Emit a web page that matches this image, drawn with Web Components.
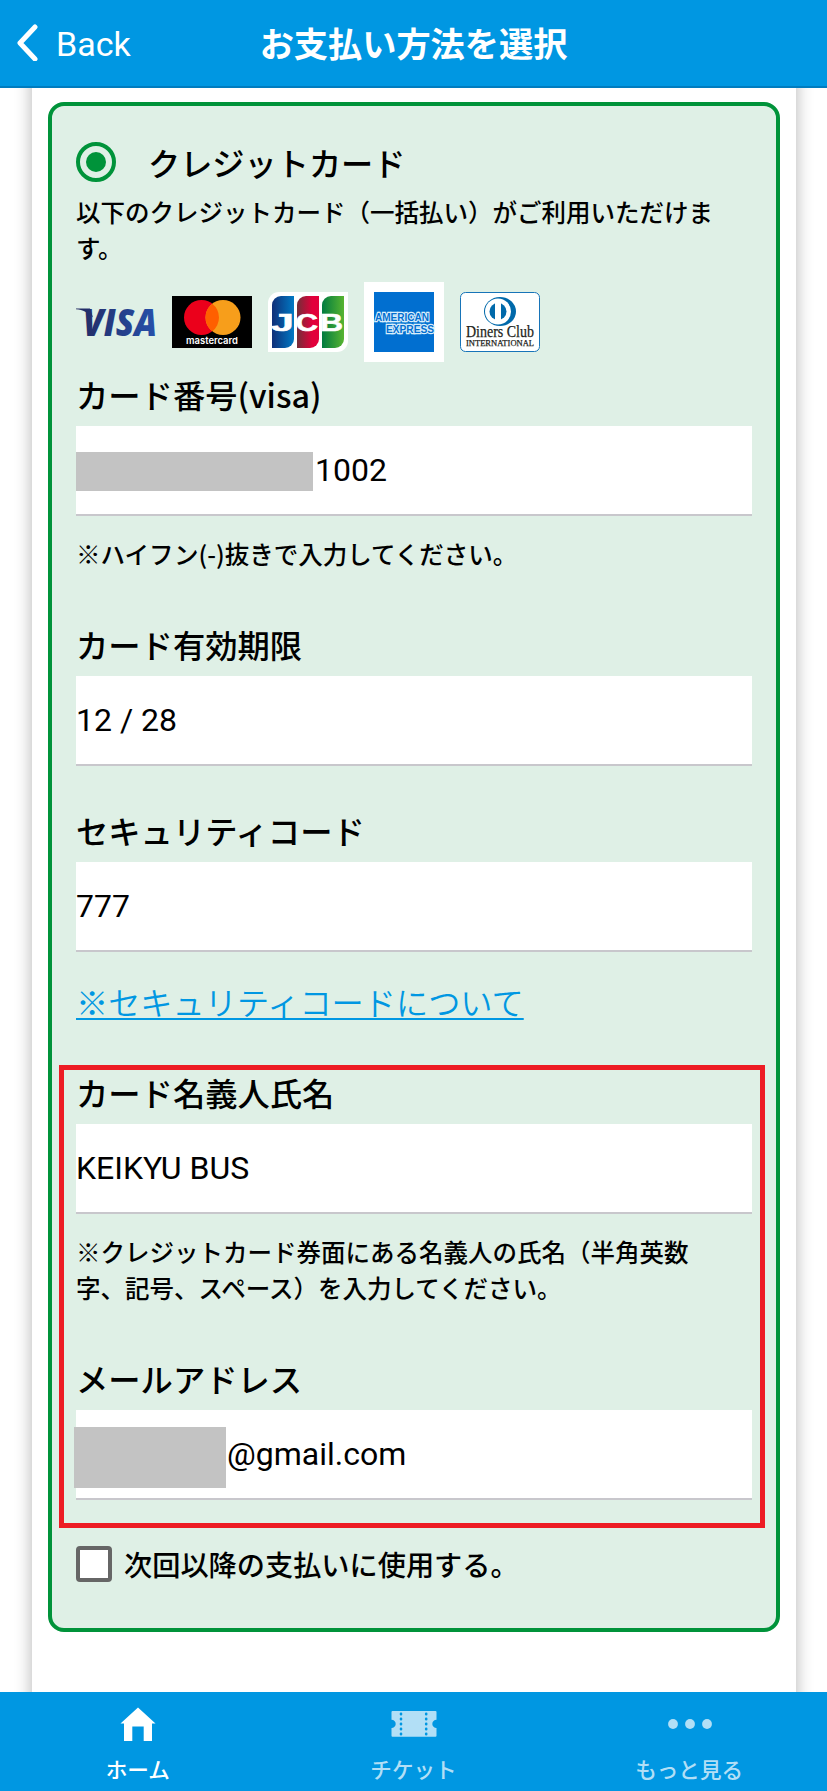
<!DOCTYPE html>
<html lang="ja">
<head>
<meta charset="utf-8">
<title>お支払い方法を選択</title>
<style>
    body {
        margin: 0;
        background: #fff;
        color: #000;
        font-family: Roboto, "Noto Sans CJK JP", sans-serif;
    }
</style>
</head>
<body>
<payment-app></payment-app>

<script>
class NavHeader extends HTMLElement {
    constructor() {
        super();
        this.attachShadow({mode: "open"}).innerHTML = `
        <style>
            :host {
                display: grid;
                grid-template-columns: 1fr auto 1fr;
                align-items: center;
                box-sizing: border-box;
                height: 88px;
                padding: 0 16px 2px 16px;
                background: #0097e2;
                border-bottom: 2px solid #007cbf;
                color: #fff;
            }
            .back {
                display: flex;
                align-items: center;
                gap: 18px;
                font-size: 34px;
                line-height: 40px;
            }
            .back span {
                padding-top: 4px;
            }
            h1 {
                margin: 0;
                font: 700 34.2px/50px "Noto Sans CJK JP", sans-serif;
            }
        </style>
        <div class="back">
            <svg width="22" height="38" viewBox="0 0 22 38" fill="none" stroke="#fff" stroke-width="5" stroke-linecap="round" stroke-linejoin="round"><path d="M19 4 4 20 19 36"/></svg>
            <span>Back</span>
        </div>
        <h1><slot></slot></h1>`;
    }
}

class CardBrands extends HTMLElement {
    constructor() {
        super();
        this.attachShadow({mode: "open"}).innerHTML = `
        <style>
            :host {
                display: flex;
                align-items: center;
                gap: 16px;
                height: 80px;
            }
            svg {
                display: block;
                width: 80px;
                overflow: visible;
            }
        </style>
        <svg height="60" viewBox="0 0 80 60">
            <defs><linearGradient id="v" x1="0" x2="80" y1="0" y2="0" gradientUnits="userSpaceOnUse"><stop stop-color="#232a61"/><stop offset="1" stop-color="#2650aa"/></linearGradient></defs>
            <g fill="url(#v)">
                <text x="7" y="43.500" font-family="Open Sans" font-size="37" font-weight="800" font-style="italic" textLength="74" lengthAdjust="spacingAndGlyphs">VISA</text>
                <path d="M0 16.500h14l3 9C12 20 7 18 0 17.200z"/>
            </g>
        </svg>
        <svg height="52" viewBox="0 0 80 52">
            <path d="M0 0h80v52H0z"/>
            <circle cx="29.500" cy="21.500" r="17.500" fill="#eb001b"/>
            <circle cx="51" cy="21.500" r="17.500" fill="#f79e1b"/>
            <path d="M40.250 7.700a17.500 17.500 0 0 1 0 27.600a17.500 17.500 0 0 1 0-27.600z" fill="#ff5f00"/>
            <text x="14" y="47.500" fill="#fff" font-family="Inter" font-size="9.500" font-weight="600" textLength="52" lengthAdjust="spacingAndGlyphs">mastercard</text>
        </svg>
        <svg height="60" viewBox="0 0 80 60">
            <defs>
                <linearGradient id="j"><stop stop-color="#0f2f78"/><stop offset="1" stop-color="#0079c4"/></linearGradient>
                <linearGradient id="c"><stop stop-color="#732e38"/><stop offset=".7" stop-color="#e2003b"/></linearGradient>
                <linearGradient id="b"><stop stop-color="#007b40"/><stop offset="1" stop-color="#57b430"/></linearGradient>
            </defs>
            <path d="M11 0h69v49a11 11 0 0 1-11 11H0V11A11 11 0 0 1 11 0z" fill="#fff"/>
            <path d="M13 4h13v43a9 9 0 0 1-9 9H4V13a9 9 0 0 1 9-9z" fill="url(#j)"/>
            <path d="M38 4h13v43a9 9 0 0 1-9 9H29V13a9 9 0 0 1 9-9z" fill="url(#c)"/>
            <path d="M63 4h13v43a9 9 0 0 1-9 9H54V13a9 9 0 0 1 9-9z" fill="url(#b)"/>
            <g fill="#fff" stroke="#fff" stroke-width=".6" font-family="Liberation Sans" font-size="24" font-weight="700">
                <text transform="translate(3 38.500) scale(1.700 1)">J</text>
                <text transform="translate(27.500 38.500) scale(1.300 1)">C</text>
                <text transform="translate(52 38.500) scale(1.330 1)">B</text>
            </g>
        </svg>
        <svg height="80" viewBox="0 0 80 80">
            <path d="M0 0h80v80H0z" fill="#fff"/>
            <path d="M10 10h60v60H10z" fill="#016fd0"/>
            <g fill="#016fd0" stroke="#d9eefb" stroke-width="2.400" paint-order="stroke" font-family="Liberation Sans" font-size="11.500" font-weight="700">
                <text x="11" y="38.500" textLength="54" lengthAdjust="spacingAndGlyphs">AMERICAN</text>
                <text x="22" y="51" textLength="48" lengthAdjust="spacingAndGlyphs">EXPRESS</text>
            </g>
        </svg>
        <svg height="60" viewBox="0 0 80 60">
            <rect x=".5" y=".5" width="79" height="59" rx="5" fill="#fff" stroke="#1774b8"/>
            <ellipse cx="40" cy="19.500" rx="16" ry="14.500" fill="#0069aa"/>
            <circle cx="38" cy="19.500" r="13" fill="#fff"/>
            <circle cx="38" cy="19.500" r="8.500" fill="#0069aa"/>
            <path d="M35 10h6v19h-6z" fill="#fff"/>
            <g fill="#231f20" stroke="#231f20" stroke-width=".25" font-family="Liberation Serif">
                <text x="6" y="44.500" font-size="16" textLength="68" lengthAdjust="spacingAndGlyphs">Diners Club</text>
                <text x="6" y="54" font-size="8.500" textLength="68" lengthAdjust="spacingAndGlyphs">INTERNATIONAL</text>
            </g>
        </svg>`;
    }
}

class FormField extends HTMLElement {
    constructor() {
        super();
        this.attachShadow({mode: "open"});
    }

    connectedCallback() {
        this.shadowRoot.innerHTML = `
        <style>
            :host {
                display: block;
            }
            label {
                display: block;
                font: 500 32.3px/48px "Noto Sans CJK JP", sans-serif;
            }
            .value {
                display: flex;
                align-items: center;
                box-sizing: border-box;
                height: 90px;
                margin-top: 8px;
                background: #fff;
                border-bottom: 2px solid #c8c7cc;
                font-size: 32px;
                line-height: 38px;
            }
            ::slotted(p) {
                margin: 20px 24px 0 0;
                padding-bottom: 1px;
                font: 500 24.5px/36px "Noto Sans CJK JP", sans-serif;
            }
        </style>
        <label>${this.getAttribute("label")}</label>
        <div class="value"><slot name="mask"></slot><span>${this.getAttribute("value")}</span></div>
        <slot></slot>`;
    }
}

class MaskBlock extends HTMLElement {
    constructor() {
        super();
        this.attachShadow({mode: "open"}).innerHTML = `
        <style>
            :host {
                display: block;
                flex: none;
                background: #c3c3c3;
            }
        </style>`;
    }
}

class CreditPanel extends HTMLElement {
    constructor() {
        super();
        this.attachShadow({mode: "open"}).innerHTML = `
        <style>
            :host {
                display: block;
                position: relative;
                box-sizing: border-box;
                height: 1530px;
                padding: 32px 24px 0;
                background: #dff0e6;
                border: 4px solid #00933a;
                border-radius: 16px;
                font-family: Roboto, "Noto Sans CJK JP", sans-serif;
            }
            .choice {
                display: flex;
                align-items: center;
                gap: 32px;
                height: 48px;
                font: 500 32.2px/48px "Noto Sans CJK JP", sans-serif;
            }
            .radio {
                display: grid;
                place-items: center;
                box-sizing: border-box;
                width: 40px;
                height: 40px;
                border: 4px solid #00933a;
                border-radius: 50%;
            }
            .radio::after {
                content: "";
                width: 20px;
                height: 20px;
                border-radius: 50%;
                background: #00933a;
            }
            .lead {
                margin: 8px 0 16px;
                font: 500 24.5px/36px "Noto Sans CJK JP", sans-serif;
            }
            card-brands {
                margin-bottom: 8px;
            }
            .expiry {
                margin-top: 47px;
            }
            .code {
                margin-top: 40px;
            }
            a {
                display: block;
                width: max-content;
                margin: 25px 0 43px;
                color: #0097e2;
                font: 350 32.2px/48px "Noto Sans CJK JP", sans-serif;
                text-decoration: underline 2px;
                text-decoration-skip-ink: none;
                text-underline-offset: 3px;
            }
            .mail {
                margin-top: 47px;
            }
            .number-mask {
                width: 237px;
                height: 39px;
                margin: 3px 2px 0 0;
            }
            .mail-mask {
                width: 152px;
                height: 61px;
                margin: 6px 1px 0 -2px;
            }
            .save {
                display: flex;
                align-items: center;
                gap: 12px;
                margin-top: 44px;
                font: 500 28.2px/40px "Noto Sans CJK JP", sans-serif;
            }
            .box {
                box-sizing: border-box;
                width: 36px;
                height: 36px;
                border: 4px solid #666;
                border-radius: 4px;
                background: #fff;
            }
            .highlight {
                position: absolute;
                top: 959px;
                left: 7px;
                right: 11px;
                box-sizing: border-box;
                height: 463px;
                border: 5px solid #ed1c24;
            }
        </style>
        <div class="choice"><span class="radio"></span><span>クレジットカード</span></div>
        <p class="lead">以下のクレジットカード（一括払い）がご利用いただけます。</p>
        <card-brands></card-brands>
        <form-field label="カード番号(visa)" value="1002">
            <mask-block slot="mask" class="number-mask"></mask-block>
            <p>※ハイフン(-)抜きで入力してください。</p>
        </form-field>
        <form-field class="expiry" label="カード有効期限" value="12 / 28"></form-field>
        <form-field class="code" label="セキュリティコード" value="777"></form-field>
        <a>※セキュリティコードについて</a>
        <form-field label="カード名義人氏名" value="KEIKYU BUS">
            <p>※クレジットカード券面にある名義人の氏名（半角英数字、記号、スペース）を入力してください。</p>
        </form-field>
        <form-field class="mail" label="メールアドレス" value="@gmail.com">
            <mask-block slot="mask" class="mail-mask"></mask-block>
        </form-field>
        <div class="save"><span class="box"></span><span>次回以降の支払いに使用する。</span></div>
        <div class="highlight"></div>`;
    }
}

class TabItem extends HTMLElement {
    constructor() {
        super();
        this.attachShadow({mode: "open"}).innerHTML = `
        <style>
            :host {
                display: flex;
                flex-direction: column;
                align-items: center;
                padding-top: 12px;
                color: #b2dff6;
                font: 500 21.6px/32px "Noto Sans CJK JP", sans-serif;
            }
            :host([active]) {
                color: #fff;
            }
            .icon {
                height: 40px;
                margin-bottom: 9px;
            }
        </style>
        <div class="icon"><slot name="icon"></slot></div>
        <slot></slot>`;
    }
}

class TabBar extends HTMLElement {
    constructor() {
        super();
        this.attachShadow({mode: "open"}).innerHTML = `
        <style>
            :host {
                display: grid;
                grid-template-columns: repeat(3, 1fr);
                height: 99px;
                background: #0097e2;
            }
            svg {
                display: block;
                fill: currentColor;
            }
        </style>
        <tab-item active>
            <svg slot="icon" width="48" height="40" viewBox="0 0 48 40"><path d="M24 3.500 41.500 19.500H38V37H29.700V22.500H18.300V37H10V19.500H6.500z"/></svg>
            ホーム
        </tab-item>
        <tab-item>
            <svg slot="icon" width="48" height="40" viewBox="0 0 48 40">
                <path d="M3.500 7h43q1 0 1 1v7.700a4.200 4.200 0 0 0 0 8.400V31.700q0 1-1 1h-43q-1 0-1-1v-7.600a4.200 4.200 0 0 0 0-8.400V8q0-1 1-1z"/>
                <path d="M12 9.800v22M37.200 9.800v22" fill="none" stroke="#0097e2" stroke-width="2.600" stroke-linecap="round" stroke-dasharray=".5 4.500"/>
            </svg>
            チケット
        </tab-item>
        <tab-item>
            <svg slot="icon" width="48" height="40" viewBox="0 0 48 40"><circle cx="8" cy="20" r="4.900"/><circle cx="25" cy="20" r="4.900"/><circle cx="42" cy="20" r="4.900"/></svg>
            もっと見る
        </tab-item>`;
    }
}

class PaymentApp extends HTMLElement {
    constructor() {
        super();
        this.attachShadow({mode: "open"}).innerHTML = `
        <style>
            :host {
                display: flex;
                flex-direction: column;
                height: 1791px;
                overflow: hidden;
            }
            main {
                flex: 1;
                min-height: 0;
                padding: 0 31px 0 32px;
                overflow: hidden;
            }
            /* runs past both bars so the shadow stays even along the sides */
            .sheet {
                height: 1660px;
                box-sizing: border-box;
                margin-top: -24px;
                padding: 38px 16px 0;
                background: #fff;
                box-shadow: 0 0 16px rgba(0, 0, 0, .3);
            }
        </style>
        <nav-header>お支払い方法を選択</nav-header>
        <main><div class="sheet"><credit-panel></credit-panel></div></main>
        <tab-bar></tab-bar>`;
    }
}

customElements.define("nav-header", NavHeader);
customElements.define("card-brands", CardBrands);
customElements.define("mask-block", MaskBlock);
customElements.define("form-field", FormField);
customElements.define("credit-panel", CreditPanel);
customElements.define("tab-item", TabItem);
customElements.define("tab-bar", TabBar);
customElements.define("payment-app", PaymentApp);
</script>
</body>
</html>
